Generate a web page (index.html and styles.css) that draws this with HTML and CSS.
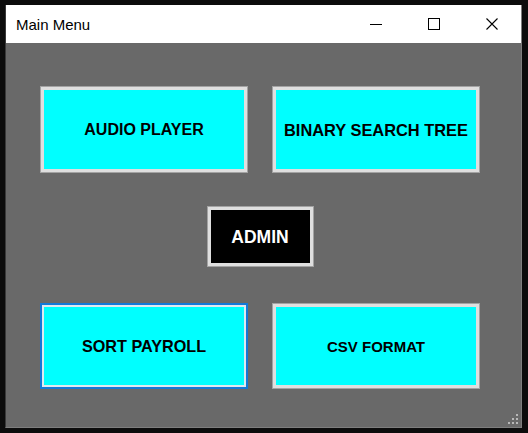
FILE: index.html
```html
<!DOCTYPE html>
<html>
<head>
<meta charset="utf-8">
<link rel="stylesheet" href="styles.css">
</head>
<body>
<div class="window">
  <div class="titlebar">
    <span class="title">Main Menu</span>
    <div class="controls">
      <div class="ctl"><svg width="12" height="12" viewBox="0 0 12 12"><path d="M0 6.5H12" stroke="#000" stroke-width="1" fill="none"/></svg></div>
      <div class="ctl"><svg width="12" height="12" viewBox="0 0 12 12"><rect x="0.5" y="0.5" width="11" height="11" stroke="#000" stroke-width="1" fill="none"/></svg></div>
      <div class="ctl"><svg width="12" height="12" viewBox="0 0 12 12"><path d="M0.5 0.5L11.5 11.5M11.5 0.5L0.5 11.5" stroke="#000" stroke-width="1.1" fill="none"/></svg></div>
    </div>
  </div>
  <div class="content">
    <div class="grid">
      <div class="btn cyan row1 f16">AUDIO PLAYER</div>
      <div class="btn cyan row1 f164">BINARY SEARCH TREE</div>
      <div class="btn admin">ADMIN</div>
      <div class="btn cyan focus f163 row3">SORT PAYROLL</div>
      <div class="btn cyan f15 row3">CSV FORMAT</div>
    </div>
    <svg class="grip" width="12" height="12" viewBox="0 0 12 12">
      <rect x="8" y="0" width="2" height="2" fill="#b8b8b8"/>
      <rect x="4" y="4" width="2" height="2" fill="#b8b8b8"/>
      <rect x="8" y="4" width="2" height="2" fill="#b8b8b8"/>
      <rect x="0" y="8" width="2" height="2" fill="#b8b8b8"/>
      <rect x="4" y="8" width="2" height="2" fill="#b8b8b8"/>
      <rect x="8" y="8" width="2" height="2" fill="#b8b8b8"/>
    </svg>
  </div>
</div>
</body>
</html>
```
FILE: styles.css
```css
html, body {
  margin: 0;
  padding: 0;
}
body {
  background: #0c0c0c;
  width: 528px;
  height: 433px;
  overflow: hidden;
  font-family: "Liberation Sans", Arial, sans-serif;
}
.window {
  margin: 5px 0 0 5px;
  width: 515px;
  border-left: 1px solid #3a3a3a;
  border-right: 1px solid #7e7e7e;
  border-bottom: 1px solid #7e7e7e;
}
.titlebar {
  height: 38px;
  background: #ffffff;
  display: flex;
  align-items: center;
  justify-content: space-between;
}
.title {
  font-family: "Liberation Sans", Arial, sans-serif;
  font-size: 15px;
  color: #000;
  padding-left: 10px;
  padding-top: 1px;
}
.controls {
  display: flex;
  height: 100%;
}
.ctl {
  width: 58px;
  height: 100%;
  display: flex;
  align-items: center;
  justify-content: center;
}
.ctl svg {
  display: block;
}
.content {
  position: relative;
  height: 384px;
  background: #696969;
  box-sizing: border-box;
  padding: 43px 0 0 34px;
}
.grid {
  display: grid;
  grid-template-columns: 208px 208px;
  column-gap: 24px;
  align-items: start;
}
.btn {
  box-sizing: border-box;
  border: 1px solid #a3a3a3;
  box-shadow: inset 0 0 0 3px #dfdfdf;
  display: flex;
  align-items: center;
  justify-content: center;
  font-weight: bold;
  color: #000;
  font-size: 16px;
  padding-top: 1px;
}
.cyan {
  background: #00ffff;
}
.row1 {
  height: 87px;
}
.f16 { font-size: 16px; }
.f164 { font-size: 16.4px; }
.f163 { font-size: 16.2px; }
.f15 { font-size: 15px; }
.admin {
  grid-column: 1 / span 2;
  justify-self: center;
  width: 107px;
  height: 61px;
  margin-top: 33px;
  background: #000;
  color: #fff;
  font-size: 17.5px;
}
.row3 {
  height: 86px;
  margin-top: 36px;
}
.focus {
  border: 2px solid #1479d6;
  box-shadow: inset 0 0 0 2px #dfe9f0;
}
.grip {
  position: absolute;
  right: 1px;
  bottom: 1px;
}
```
